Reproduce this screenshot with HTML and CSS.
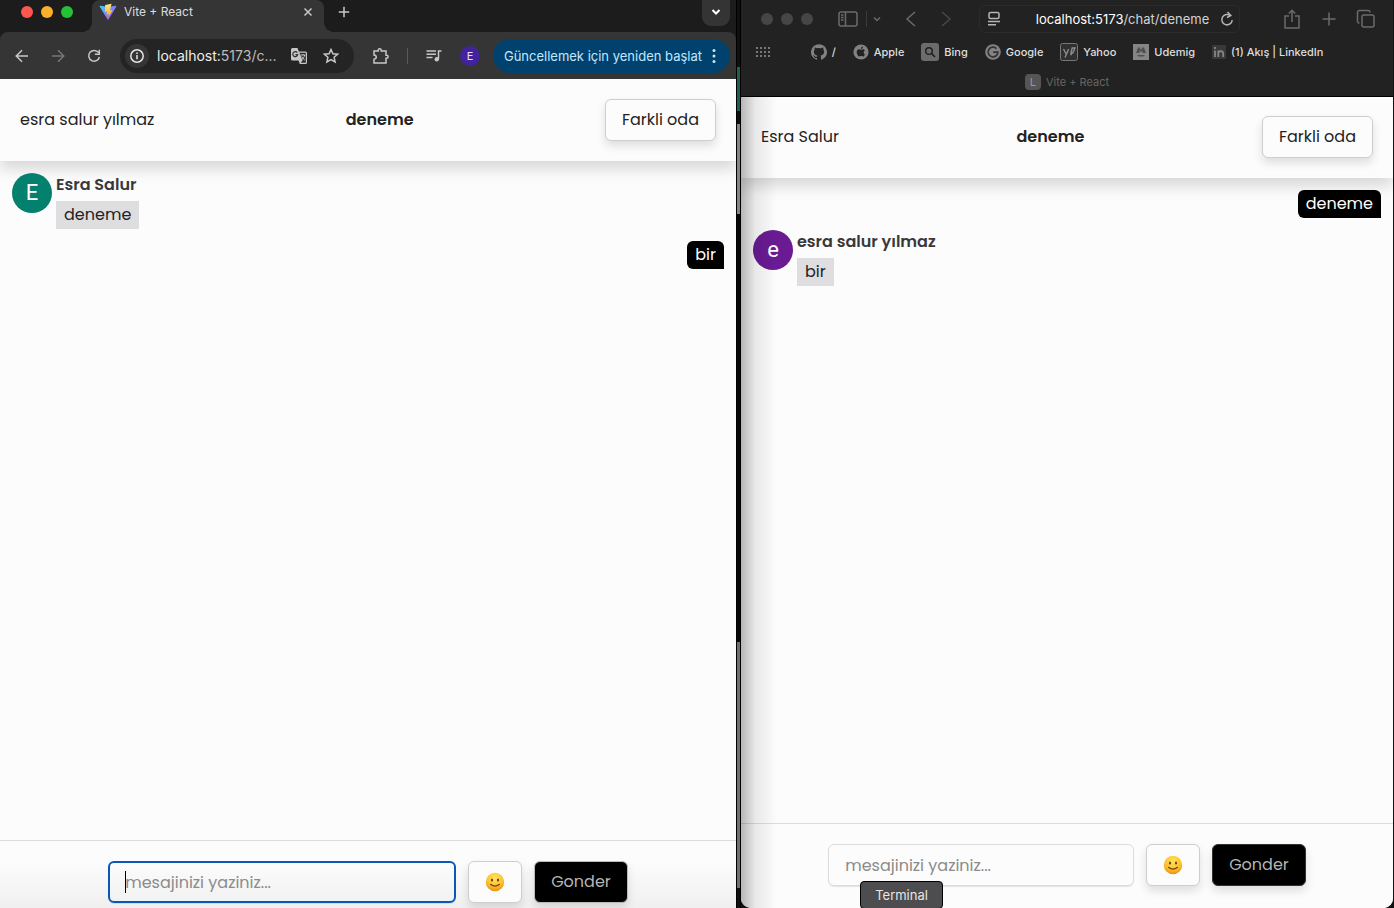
FILE: index.html
```
<!DOCTYPE html>
<html lang="tr">
<head>
<meta charset="utf-8">
<meta name="viewport" content="width=device-width, initial-scale=1">
<title>Vite + React</title>
<link rel="stylesheet" href="styles.css">
</head>
<body>
<div class="desktop">
  <section class="window window-chrome">
    <div class="tabstrip">
      <div class="lights"><span class="light red"></span><span class="light yellow"></span><span class="light green"></span></div>
      <div class="tab">
        <svg class="vite" width="18" height="18" viewBox="0 0 18 18"><defs><linearGradient id="v1" x1="0" y1="0" x2="1" y2="1"><stop offset="0" stop-color="#41d1ff"/><stop offset="1" stop-color="#bd34fe"/></linearGradient><linearGradient id="v2" x1="0" y1="0" x2="0" y2="1"><stop offset="0" stop-color="#ffea83"/><stop offset="1" stop-color="#ffa800"/></linearGradient></defs><path d="M1 3.200 9 16.500 17 3.200 9.500 4.500Z" fill="url(#v1)" stroke="url(#v1)" stroke-linejoin="round"/><path d="M12.600 .8 6.200 2 5.900 8.800 8.300 8.400 7.400 11.600 9.800 10.900 8.800 15 13.500 7 10.800 7.500Z" fill="url(#v2)"/></svg>
        <span class="tab-title">Vite + React</span>
        <button class="icon-btn tab-close" aria-label="Kapat"><svg width="10" height="10" viewBox="0 0 10 10"><path d="M1.500 1.500l7 7M8.500 1.500l-7 7" class="line"/></svg></button>
      </div>
      <button class="icon-btn new-tab" aria-label="Yeni sekme"><svg width="12" height="12" viewBox="0 0 12 12"><path d="M6 .8v10.400M.8 6h10.400" class="line"/></svg></button>
      <button class="icon-btn tab-menu" aria-label="Sekmelerde ara"><svg width="10" height="10" viewBox="0 0 10 10"><path d="M1.500 3l3.500 3.500L8.500 3" class="line thick"/></svg></button>
    </div>
    <div class="toolbar">
      <button class="icon-btn" aria-label="Geri"><svg width="16" height="16" viewBox="0 0 16 16"><path d="M14 8H2.500M8 2.200 2.200 8 8 13.800" class="line"/></svg></button>
      <button class="icon-btn faded" aria-label="İleri"><svg width="16" height="16" viewBox="0 0 16 16"><path d="M2 8h11.500M8 2.200 13.800 8 8 13.800" class="line"/></svg></button>
      <button class="icon-btn" aria-label="Yenile"><svg width="16" height="16" viewBox="0 0 16 16"><path d="M12.500 4.600A5.400 5.400 0 1 0 13.400 9M13.300 1.800v4.400H8.900" class="line"/></svg></button>
      <div class="address">
        <span class="site-info"><svg width="16" height="16" viewBox="0 0 16 16"><circle cx="8" cy="8" r="6.200" class="line"/><path d="M8 7v4.200M8 4.400v1.500" class="line"/></svg></span>
        <span class="url">localhost:<span class="dim">5173/c...</span></span>
        <button class="icon-btn mini" aria-label="Çevir"><svg width="18" height="18" viewBox="0 0 18 18"><path d="M2.500 1h5l1.300 3.500h6.700A1.500 1.500 0 0 1 17 6v9.500a1.500 1.500 0 0 1-1.500 1.500H9.800l-1.200-3.500H2.500A1.500 1.500 0 0 1 1 12V2.500A1.500 1.500 0 0 1 2.500 1Z" fill="#c7c7c7"/><path d="M9.400 5.700H15.800V15.800H10.600l2-2.300Z" fill="#2b2b2b"/><path d="M10.500 8h5M13 7v1M14.700 8c-.4 2-1.600 3.600-3 4.800M11.600 9.500c.7 1.400 1.800 2.600 3.200 3.500" fill="none" stroke="#c7c7c7" stroke-width="1"/><path d="M7.300 5.700A2.500 2.500 0 1 0 7.700 7.700H5.400" fill="none" stroke="#333" stroke-width="1.200"/></svg></button>
        <button class="icon-btn mini" aria-label="Yer işareti"><svg width="16" height="16" viewBox="0 0 16 16"><path d="M8 1.500l1.900 4.300 4.700.4-3.500 3.100 1 4.600L8 11.500l-4.100 2.400 1-4.600L1.400 6.200l4.700-.4Z" class="line"/></svg></button>
      </div>
      <button class="icon-btn" aria-label="Uzantılar"><svg width="18" height="18" viewBox="0 0 18 18"><path d="M2 4h4.200V3.200a1.500 1.500 0 0 1 3 0V4H14v4.200h.6a1.500 1.500 0 0 1 0 3H14V16H2v-3.800c3-.3 3-4 0-4.200Z" class="line"/></svg></button>
      <span class="divider"></span>
      <button class="icon-btn" aria-label="Medya"><svg width="18" height="18" viewBox="0 0 18 18"><path d="M1.500 4h9.500M1.500 7.300h9.500M1.500 10.600h6M13.500 12V4h3" class="line"/><circle cx="11.800" cy="12.300" r="2.200" fill="#c7c7c7"/></svg></button>
      <button class="profile" aria-label="Profil">E</button>
      <button class="update"><span>Güncellemek için yeniden başlat</span><svg width="4" height="16" viewBox="0 0 4 16"><circle cx="2" cy="2.500" r="1.500"/><circle cx="2" cy="8" r="1.500"/><circle cx="2" cy="13.500" r="1.500"/></svg></button>
    </div>
    <main class="chat">
      <header class="chat-head"><p>esra salur yılmaz</p><p class="room">deneme</p><button class="btn">Farkli oda</button></header>
      <div class="messages">
        <article class="incoming"><span class="avatar teal">E</span><div class="content"><p class="name">Esra Salur</p><p class="bubble">deneme</p></div></article>
        <p class="outgoing">bir</p>
      </div>
      <form class="composer"><div class="field focused"><input type="text" aria-label="Mesaj" placeholder="mesajinizi yaziniz..."></div>
        <button type="button" class="btn emoji" aria-label="Emoji"><svg width="20" height="20" viewBox="0 0 20 20"><defs><radialGradient id="face" cx=".5" cy=".3" r=".75"><stop offset="0" stop-color="#ffe45c"/><stop offset=".6" stop-color="#fdc02c"/><stop offset="1" stop-color="#e88612"/></radialGradient></defs><circle cx="10" cy="10" r="9.200" fill="url(#face)"/><ellipse cx="7" cy="8" rx="1.100" ry="1.600" fill="#70400c"/><ellipse cx="13" cy="8" rx="1.100" ry="1.600" fill="#70400c"/><path d="M5.500 12.300Q10 16 14.500 12.300" fill="none" stroke="#70400c" stroke-width="1.200" stroke-linecap="round"/></svg></button>
        <button type="button" class="btn send">Gonder</button></form>
    </main>
  </section>

  <div class="backdrop"><span class="strip dark"></span><span class="strip terminal"></span><span class="strip dark short"></span><span class="strip grey"></span><span class="strip dark tall"></span><span class="strip grey long"></span><span class="strip dark end"></span></div>

  <section class="window window-safari">
    <div class="safari-bar">
      <div class="safari-row">
        <div class="lights"><span class="light"></span><span class="light"></span><span class="light"></span></div>
        <button class="icon-btn sidebar" aria-label="Kenar çubuğu"><svg width="20" height="16" viewBox="0 0 20 16"><rect x="1" y="1" width="18" height="14" rx="2" class="line"/><path d="M7.500 1v14M3 4h2.500M3 6.500h2.500M3 9h2.500" class="line"/></svg></button>
        <span class="divider"></span>
        <button class="icon-btn small" aria-label="Sekme grupları"><svg width="8" height="8" viewBox="0 0 8 8"><path d="M1 2.500l3 3 3-3" class="line"/></svg></button>
        <button class="icon-btn nav" aria-label="Geri"><svg width="12" height="16" viewBox="0 0 12 16"><path d="M10 1 2 8l8 7" class="line"/></svg></button>
        <button class="icon-btn nav faded" aria-label="İleri"><svg width="12" height="16" viewBox="0 0 12 16"><path d="M2 1l8 7-8 7" class="line"/></svg></button>
        <div class="safari-url">
          <svg width="14" height="16" viewBox="0 0 14 16"><rect x="2" y="1.500" width="10" height="6" rx="1.500" class="line"/><path d="M1 10.500h12M1 13.800h8" class="line"/></svg>
          <span class="safari-host">localhost:5173<span class="dim">/chat/deneme</span></span>
          <svg width="14" height="16" viewBox="0 0 14 16"><path d="M10.500 4.800A5.200 5.200 0 1 0 12.200 9M7.500 1l3.300 3.600L7 6.500" class="line"/></svg>
        </div>
        <div class="safari-actions">
          <button class="icon-btn" aria-label="Paylaş"><svg width="18" height="20" viewBox="0 0 18 20"><path d="M6 7H2v12h14V7h-4M9 13V1.500M5.800 4.500 9 1.300l3.200 3.200" class="line"/></svg></button>
          <button class="icon-btn" aria-label="Yeni sekme"><svg width="14" height="14" viewBox="0 0 14 14"><path d="M7 .5v13M.5 7h13" class="line"/></svg></button>
          <button class="icon-btn" aria-label="Sekmeler"><svg width="20" height="20" viewBox="0 0 20 20"><rect x="6" y="6" width="12" height="12" rx="2" class="line"/><path d="M3.500 14H3a1.500 1.500 0 0 1-1.500-1.500v-9A2 2 0 0 1 3.500 1.500H12A2 2 0 0 1 14 3.500" class="line"/></svg></button>
        </div>
      </div>
      <nav class="bookmarks">
        <button class="icon-btn apps" aria-label="Favoriler"><svg width="14" height="10" viewBox="0 0 14 10" fill="#777"><path d="M0 0h2v2H0zM4 0h2v2H4zM8 0h2v2H8zM12 0h2v2h-2zM0 4h2v2H0zM4 4h2v2H4zM8 4h2v2H8zM12 4h2v2h-2zM0 8h2v2H0zM4 8h2v2H4zM8 8h2v2H8zM12 8h2v2h-2z"/></svg></button>
        <a href="#"><svg width="16" height="16" viewBox="0 0 16 16"><path fill="#828282" d="M8 .2a8 8 0 0 0-2.500 15.600c.4.100.5-.2.500-.4v-1.500c-2.200.5-2.700-1-2.700-1-.4-.9-.9-1.200-.9-1.200-.7-.5.100-.5.100-.5.800.1 1.200.8 1.200.8.700 1.200 1.900.9 2.300.7.100-.5.300-.9.500-1.100-1.800-.2-3.600-.9-3.600-4 0-.9.300-1.600.8-2.100-.1-.2-.4-1 .1-2.100 0 0 .7-.2 2.200.8a7.600 7.600 0 0 1 4 0c1.500-1 2.200-.8 2.200-.8.400 1.100.2 1.900.1 2.100.5.600.8 1.300.8 2.100 0 3.100-1.900 3.800-3.700 4 .3.300.6.800.6 1.500v2.300c0 .2.100.5.500.4A8 8 0 0 0 8 .2Z"/></svg>/</a>
        <a href="#"><svg width="16" height="16" viewBox="0 0 16 16"><circle cx="8" cy="8" r="7.600" fill="#828282"/><path d="M10.500 5.300c-1-.1-1.600.5-2.300.5-.8 0-1.300-.5-2.100-.5C3.700 5.400 3.300 8.200 4.300 10.500c.5 1.200 1.200 2 2 2 .6 0 .9-.4 1.800-.4s1.200.4 1.800.4c.9 0 1.500-1 2-2.100-1.700-.8-1.600-3 0-3.800-.4-.7-.9-1.100-1.400-1.300ZM8 5c0-1.200.8-2.300 2-2.500C10.100 3.800 9.300 4.900 8 5Z" fill="#222"/></svg>Apple</a>
        <a href="#"><svg width="18" height="18" viewBox="0 0 18 18"><rect width="18" height="18" rx="3" fill="#6c6c6c"/><circle cx="8" cy="8" r="3.300" fill="none" stroke="#222" stroke-width="1.500"/><path d="M10.500 10.500 14 14" stroke="#222" stroke-width="1.700"/></svg>Bing</a>
        <a href="#"><svg width="16" height="16" viewBox="0 0 16 16"><circle cx="8" cy="8" r="7.800" fill="#828282"/><path d="M11.500 4.600A4.900 4.900 0 1 0 12.900 8.200H8.200" fill="none" stroke="#333" stroke-width="1.700"/></svg>Google</a>
        <a href="#"><svg width="18" height="18" viewBox="0 0 18 18"><rect x=".5" y=".5" width="17" height="17" rx="2" fill="#303030" stroke="#777"/><path d="M3.500 6l2.700 5M8.700 6l-3.700 8.500M11 10 12.200 5H15l-2.200 5ZM10.300 11.500h1.600" fill="none" stroke="#8d8d8d" stroke-width="1.400"/></svg>Yahoo</a>
        <a href="#"><svg width="16" height="16" viewBox="0 0 16 16"><rect width="16" height="16" fill="#858585"/><path d="M3 9 5 3.500h1.800l.7 2h1l.7-2H11L13 9H9.500V7.500h-3V9ZM4 11h8l-1.500 1.500h-5Z" fill="#505050"/></svg>Udemig</a>
        <a href="#"><svg width="14" height="14" viewBox="0 0 14 14"><rect width="14" height="14" rx="1" fill="#393939"/><path d="M3 5.500V12M3 2v2M6.300 12V5.500M6.300 8.500c0-3.300 4.900-3.300 4.900 0V12" fill="none" stroke="#858585" stroke-width="1.800"/></svg>(1) Akış | LinkedIn</a>
      </nav>
      <div class="safari-tab"><span class="letter">L</span>Vite + React</div>
    </div>
    <main class="chat">
      <header class="chat-head"><p>Esra Salur</p><p class="room">deneme</p><button class="btn">Farkli oda</button></header>
      <div class="messages">
        <p class="outgoing">deneme</p>
        <article class="incoming"><span class="avatar purple">e</span><div class="content"><p class="name">esra salur yılmaz</p><p class="bubble">bir</p></div></article>
      </div>
      <form class="composer"><div class="field"><input type="text" aria-label="Mesaj" placeholder="mesajinizi yaziniz..."><span class="tooltip">Terminal</span></div>
        <button type="button" class="btn emoji" aria-label="Emoji"><svg width="20" height="20" viewBox="0 0 20 20"><circle cx="10" cy="10" r="9.200" fill="url(#face)"/><ellipse cx="7" cy="8" rx="1.100" ry="1.600" fill="#70400c"/><ellipse cx="13" cy="8" rx="1.100" ry="1.600" fill="#70400c"/><path d="M5.500 12.300Q10 16 14.500 12.300" fill="none" stroke="#70400c" stroke-width="1.200" stroke-linecap="round"/></svg></button>
        <button type="button" class="btn send">Gonder</button></form>
    </main>
  </section>
</div>
</body>
</html>
```
FILE: styles.css
```
* { box-sizing: border-box; }
body { margin: 0; background: #111; font-family: Poppins, "Open Sans", sans-serif; font-size: 16px; line-height: 24px; color: #222; }
p { margin: 0; }
button, input { font: inherit; color: inherit; margin: 0; }
svg { display: block; flex: none; }
.line { fill: none; stroke: currentColor; stroke-width: 1.5; }
.line.thick { stroke-width: 2; }

.desktop { display: grid; grid-template-columns: 736fr 5px 653fr; height: 100vh; overflow: hidden; }
.window { display: flex; flex-direction: column; min-width: 0; min-height: 0; }
.icon-btn { display: flex; align-items: center; justify-content: center; flex: none; width: 36px; height: 32px; padding: 0; border: 0; background: none; color: #c7c7c7; }
.icon-btn.faded { color: #777; }
.lights { display: flex; gap: 8px; flex: none; }
.light { width: 12px; height: 12px; border-radius: 50%; background: #464648; }
.red { background: #ff5750; }
.yellow { background: #fbb02a; }
.green { background: #27c138; }
.divider { flex: none; width: 1px; height: 16px; background: #555; }

/* Chrome window */
.window-chrome { background: #1c1c1c; }
.tabstrip { display: flex; height: 32px; padding: 0 6px 0 21px; font-family: Inter, sans-serif; }
.tabstrip .lights { padding-top: 6px; }
.tab { position: relative; display: flex; align-items: center; width: 232px; height: 32px; margin-left: 19px; padding: 0 6px 8px 7px; background: #353535; border-radius: 8px 8px 0 0; }
.tab::before, .tab::after { content: ""; position: absolute; bottom: 0; width: 10px; height: 10px; }
.tab::before { right: 100%; background: radial-gradient(circle at 0 0, transparent 10px, #353535 10px); }
.tab::after { left: 100%; background: radial-gradient(circle at 100% 0, transparent 10px, #353535 10px); }
.tab-title { flex: 1; margin-left: 7px; font-size: 12px; line-height: 16px; color: #ddd; }
.tab-close { width: 20px; height: 20px; }
.new-tab { width: 40px; height: 24px; }
.tab-menu { width: 28px; height: 26px; margin-left: auto; padding-bottom: 2px; background: #343434; border-radius: 0 0 9px 9px; color: #fff; }
.toolbar { display: flex; align-items: center; height: 47px; padding: 0 6px 0 4px; background: #353535; font-family: Inter, sans-serif; border-radius: 8px 8px 0 0; }
.address { display: flex; align-items: center; flex: 1; height: 34px; margin: 0 9px 0 8px; padding: 0 7px 0 5px; border-radius: 17px; background: #242424; }
.site-info { display: flex; align-items: center; justify-content: center; width: 24px; height: 24px; border-radius: 50%; background: #353535; color: #e5e5e5; }
.url { flex: 1; margin-left: 8px; font-size: 14px; line-height: 20px; color: #eee; white-space: nowrap; }
.url .dim { color: #bbb; }
.icon-btn.mini { width: 32px; }
.toolbar .divider { margin: 0 8px; background: #5a5a5a; }
.profile { width: 20px; height: 20px; margin: 0 13px 0 8px; padding: 0; border: 0; border-radius: 50%; background: #43239b; color: #e7dcff; font-size: 11px; line-height: 20px; }
.update { display: flex; align-items: center; gap: 10px; height: 34px; padding: 0 14px 0 11px; border: 0; border-radius: 17px; background: #00426d; color: #c2e7ff; font-size: 13px; line-height: 20px; white-space: nowrap; }
.update svg { fill: currentColor; }

/* Chat page */
.chat { display: flex; flex-direction: column; flex: 1; min-height: 0; background: #fcfcfc; }
.chat-head { display: flex; align-items: center; justify-content: space-between; padding: 20px; box-shadow: 0 8px 14px rgba(0, 0, 0, .15); }
.room { font-weight: 600; }
.btn { padding: 8px 16px; border: 1px solid #cdcdd2; border-radius: 6px; background: #fcfcfc; box-shadow: 0 5px 10px rgba(0, 0, 0, .12); }
.messages { display: flex; flex-direction: column; gap: 12px; flex: 1; padding: 12px; }
.incoming { display: flex; align-items: flex-start; gap: 4px; }
.avatar { display: flex; align-items: center; justify-content: center; width: 40px; height: 40px; border-radius: 50%; color: #fff; font-family: Roboto, sans-serif; font-size: 22px; }
.teal { background: #04806e; }
.purple { background: #6a1b94; }
.content { display: flex; flex-direction: column; align-items: flex-start; gap: 4px; }
.name { font-weight: 600; color: #38383b; }
.bubble { padding: 2px 8px; background: #dedee0; }
.outgoing { align-self: flex-end; padding: 2px 8px; border-radius: 6px 6px 0 6px; background: #000; color: #fff; }
.composer { display: flex; justify-content: center; gap: 12px; padding: 20px 20px 5px; border-top: 1px solid #ddd; background: linear-gradient(#fcfcfc 30%, #f0f0f0); }
.field { position: relative; width: 50%; }
.field input { display: block; width: 100%; height: 42px; padding: 0 16px; border: 1px solid #dcdcdc; border-radius: 6px; background: transparent; outline: 0; box-shadow: 0 1px 1px rgba(0, 0, 0, .1); }
.field input::placeholder { color: #8b8b8b; opacity: 1; }
.field.focused input { border: 2px solid #0b57b8; padding: 0 15px; }
.focused::after { content: ""; position: absolute; left: 17px; top: 10px; width: 1px; height: 22px; background: #000; }
.btn.emoji { display: flex; align-items: center; width: 54px; }
.btn.send { border-color: #bbb; background: #000; color: #b5b5b5; }

/* Strip of the desktop between the windows */
.backdrop { display: flex; flex-direction: column; border-left: 1px solid #000; border-right: 1px solid #000; }
.strip { background: #101010; }
.dark { height: 67px; }
.terminal { height: 44px; background: #1e5f51; }
.short { height: 13px; }
.grey { height: 90px; background: #858585; }
.tall { flex: 1; background: #080808; }
.long { height: 246px; background: #707070; }
.end { height: 20px; }

/* Safari window */
.window-safari { position: relative; border-right: 1px solid #111; border-radius: 0 0 10px 10px; overflow: hidden; }
.window-safari::after { content: ""; position: absolute; left: 0; top: 97px; bottom: 0; width: 36px; background: linear-gradient(90deg, rgba(0, 0, 0, .28), rgba(0, 0, 0, .08) 40%, transparent); pointer-events: none; }
.safari-bar { flex: none; border-bottom: 1px solid #000; background: #222; font-family: Inter, sans-serif; }
.safari-row { display: flex; align-items: center; height: 38px; padding: 0 9px 0 20px; }
.safari-bar .icon-btn { color: #6b6b6b; }
.safari-bar .icon-btn.sidebar { width: 20px; margin: 0 8px 0 25px; }
.safari-row .divider { background: #3b3b3b; }
.safari-bar .icon-btn.small { width: 20px; margin-right: 4px; }
.safari-bar .icon-btn.nav { margin-left: 5px; width: 30px; }
.safari-bar .nav + .nav.faded { color: #484848; }
.safari-url { display: flex; align-items: center; justify-content: space-between; flex: 1; height: 28px; margin: 0 34px 0 18px; padding: 0 5px 0 7px; border: 1px solid #2b2b2b; border-radius: 6px; color: #b5b5b5; }
.safari-host { margin-left: 24px; font-size: 13px; line-height: 16px; color: #fff; white-space: nowrap; }
.safari-host .dim { color: #d2d2d2; }
.safari-actions { display: flex; gap: 1px; }
.bookmarks { display: flex; align-items: center; justify-content: center; gap: 17px; position: relative; height: 28px; }
.bookmarks a { display: flex; align-items: center; gap: 5px; color: #dedede; font-size: 11px; line-height: 16px; font-weight: 500; text-decoration: none; white-space: nowrap; }
.bookmarks .apps { position: absolute; left: 15px; width: 14px; height: 28px; }
.safari-tab { display: flex; align-items: center; justify-content: center; gap: 5px; height: 30px; padding-top: 2px; font-size: 11px; line-height: 16px; color: #666; }
.letter { width: 16px; height: 16px; border-radius: 4px; background: #555; color: #999; text-align: center; }
.bookmarks + .safari-tab { margin-bottom: 0; }
.window-safari .btn.send { border-color: #333; }
.window-safari .chat-head { padding-top: 19px; }
.window-safari .composer { padding-bottom: 22px; background: #fcfcfc; }
.tooltip { position: absolute; left: 32px; bottom: -23px; padding: 4px 14px; border: 1px solid #000; border-radius: 4px; background: #4d4d4f; color: #e6e6e6; font-family: Inter, sans-serif; font-size: 13px; line-height: 18px; }
```
